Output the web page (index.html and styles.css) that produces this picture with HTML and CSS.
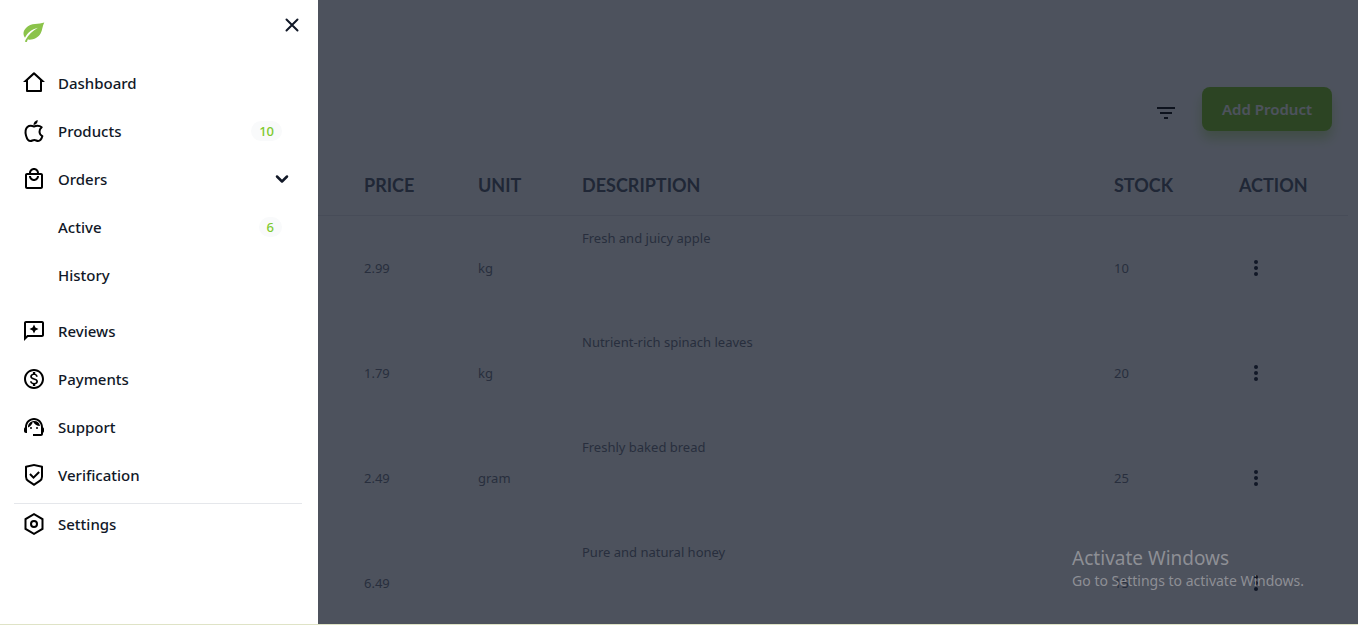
FILE: index.html
```html
<!DOCTYPE html>
<html lang="en">
<head>
    <meta charset="UTF-8">
    <meta name="viewport" content="width=device-width, initial-scale=1.0">
    <title>Products</title>
    <link rel="stylesheet" href="styles.css">
</head>
<body>
    <aside class="drawer">
        <header class="drawer-header">
            <a class="logo" href="#" aria-label="Home">
                <svg width="24" height="24" viewBox="0 0 24 24"><path fill="#8bc34a" d="M22.300 2.500C17 4.500 9 2.500 4 8 1 11 .8 14.500 3 17.800c2.500-5 6.500-8.300 13-10C10.500 11 6.500 14.500 3.500 20l-.6 1.700 2 .2.8-2.300c5.500.6 10.500-1.600 13-6.300 1.800-3.300 1.600-7.300 3.600-10.800z"/></svg>
            </a>
            <button class="close" type="button" aria-label="Close menu">
                <svg width="24" height="24" viewBox="0 0 24 24" fill="none" stroke="currentColor" stroke-width="2" stroke-linecap="round"><path d="M6.500 6.500l11 11M17.500 6.500l-11 11"/></svg>
            </button>
        </header>
        <nav class="menu">
            <a class="item" href="#">
                <svg class="icon" viewBox="0 0 24 24"><path d="M19 21H5a1 1 0 0 1-1-1v-9H1l10.327-9.388a1 1 0 0 1 1.346 0L23 11h-3v9a1 1 0 0 1-1 1zm-13-2h12V9.157l-6-5.454-6 5.454V19z"/></svg>
                Dashboard
            </a>
            <a class="item" href="#">
                <svg class="icon" viewBox="0 0 24 24"><path d="M15.700 1c.2 2.700-1.600 4.800-4.200 5.100C11.400 3.500 13.300 1.500 15.700 1z"/><path fill="none" stroke="#000" stroke-width="2" stroke-linejoin="round" d="M19.700 8.300C17 6.100 15 6.300 12 7.500 9 6.300 7.200 6.400 5.400 8 1.500 11.700 4.500 22 8.600 22c1.500 0 2-1 3.700-1s2.200 1 3.800 1c2 0 3.700-2.700 4.300-4.900-3.600-1.600-3.900-6.300-.7-8.800z"/></svg>
                Products
                <span class="badge">10</span>
            </a>
            <button class="item" type="button" aria-expanded="true">
                <svg class="icon" viewBox="0 0 24 24"><path d="M19 6h-2c0-2.760-2.240-5-5-5S7 3.240 7 6H5c-1.100 0-2 .9-2 2v12c0 1.100.9 2 2 2h14c1.100 0 2-.9 2-2V8c0-1.100-.9-2-2-2zm-7-3c1.660 0 3 1.340 3 3H9c0-1.660 1.340-3 3-3zm7 17H5V8h14v12zm-7-8c-1.660 0-3-1.340-3-3H7c0 2.760 2.240 5 5 5s5-2.240 5-5h-2c0 1.660-1.340 3-3 3z"/></svg>
                Orders
                <svg class="chevron" viewBox="0 0 16 16"><path d="M3 5.500l5 5 5-5"/></svg>
            </button>
            <div class="submenu">
                <a class="item" href="#">Active <span class="badge">6</span></a>
                <a class="item" href="#">History</a>
            </div>
            <a class="item" href="#">
                <svg class="icon" viewBox="0 0 24 24"><path d="M20 2H4c-1.100 0-1.990.9-1.990 2L2 22l4-4h14c1.100 0 2-.9 2-2V4c0-1.100-.9-2-2-2zm0 14H5.170L4 17.170V4h16v12zm-8-1.500l1.400-3.100 3.100-1.400-3.100-1.400L12 5.500l-1.400 3.100L7.500 10l3.100 1.400z"/></svg>
                Reviews
            </a>
            <a class="item" href="#">
                <svg class="icon" viewBox="0 0 24 24"><path d="M12 2C6.480 2 2 6.480 2 12s4.480 10 10 10 10-4.480 10-10S17.520 2 12 2zm0 18c-4.410 0-8-3.590-8-8s3.590-8 8-8 8 3.590 8 8-3.590 8-8 8zm.310-8.860c-1.770-.45-2.340-.94-2.340-1.670 0-.84.790-1.430 2.100-1.430 1.380 0 1.900.66 1.940 1.640h1.710c-.05-1.340-.87-2.570-2.490-2.970V5H10.900v1.690c-1.510.32-2.720 1.300-2.720 2.810 0 1.790 1.490 2.690 3.660 3.210 1.950.46 2.340 1.150 2.340 1.870 0 .53-.39 1.390-2.100 1.390-1.600 0-2.230-.72-2.320-1.640H8.040c.1 1.700 1.360 2.660 2.860 2.970V19h2.340v-1.670c1.520-.29 2.720-1.160 2.730-2.770-.01-2.200-1.900-2.960-3.660-3.420z"/></svg>
                Payments
            </a>
            <a class="item" href="#">
                <svg class="icon" viewBox="0 0 24 24"><path d="M21 12.220C21 6.730 16.740 3 12 3c-4.690 0-9 3.650-9 9.280-.6.340-1 .98-1 1.720v2c0 1.100.9 2 2 2h1v-6.100c0-3.870 3.130-7 7-7s7 3.130 7 7V19h-8v2h8c1.100 0 2-.9 2-2v-1.220c.590-.31 1-.92 1-1.640v-2.300c0-.7-.41-1.310-1-1.620z"/><circle cx="9" cy="13" r="1"/><circle cx="15" cy="13" r="1"/><path d="M18 11.030A6.040 6.040 0 0 0 12.050 6c-3.030 0-6.290 2.510-6.030 6.450a8.075 8.075 0 0 0 4.860-5.890c1.310 2.630 4 4.440 7.120 4.470z"/></svg>
                Support
            </a>
            <a class="item" href="#">
                <svg class="icon" viewBox="0 0 24 24"><path d="M12 1l8.217 1.826a1 1 0 0 1 .783.976v9.987a6 6 0 0 1-2.672 4.992L12 23l-6.328-4.219A6 6 0 0 1 3 13.790V3.802a1 1 0 0 1 .783-.976L12 1zm0 2.049L5 4.604v9.185a4 4 0 0 0 1.781 3.328L12 20.597l5.219-3.480A4 4 0 0 0 19 13.790V4.604L12 3.050zm4.452 5.173l1.415 1.414L11.503 16 7.260 11.757l1.414-1.414 2.828 2.828 4.950-4.950z"/></svg>
                Verification
            </a>
            <hr class="divider">
            <a class="item" href="#">
                <svg class="icon" viewBox="0 0 24 24"><path d="M12 1l9.500 5.500v11L12 23l-9.500-5.500v-11L12 1zm0 2.311L4.500 7.653v8.694l7.500 4.342 7.500-4.342V7.653L12 3.311zM12 16a4 4 0 1 1 0-8 4 4 0 0 1 0 8zm0-2a2 2 0 1 0 0-4 2 2 0 0 0 0 4z"/></svg>
                Settings
            </a>
        </nav>
    </aside>

    <main class="page">
        <div class="toolbar">
            <button class="filter" type="button" aria-label="Filter">
                <svg width="24" height="24" viewBox="0 0 24 24"><path d="M10 18h4v-2h-4v2zM3 6v2h18V6H3zm3 7h12v-2H6v2z"/></svg>
            </button>
            <button class="add" type="button">Add Product</button>
        </div>
        <table class="products">
            <thead>
                <tr>
                    <th class="price">Price</th>
                    <th class="unit">Unit</th>
                    <th>Description</th>
                    <th class="stock">Stock</th>
                    <th class="action">Action</th>
                </tr>
            </thead>
            <tbody>
                <tr>
                    <td class="price">2.99</td>
                    <td>kg</td>
                    <td class="description">Fresh and juicy apple</td>
                    <td>10</td>
                    <td><button class="more" type="button" aria-label="Actions"><svg width="24" height="24" viewBox="0 0 24 24"><circle cx="12" cy="6" r="2"/><circle cx="12" cy="12" r="2"/><circle cx="12" cy="18" r="2"/></svg></button></td>
                </tr>
                <tr>
                    <td class="price">1.79</td>
                    <td>kg</td>
                    <td class="description">Nutrient-rich spinach leaves</td>
                    <td>20</td>
                    <td><button class="more" type="button" aria-label="Actions"><svg width="24" height="24" viewBox="0 0 24 24"><circle cx="12" cy="6" r="2"/><circle cx="12" cy="12" r="2"/><circle cx="12" cy="18" r="2"/></svg></button></td>
                </tr>
                <tr>
                    <td class="price">2.49</td>
                    <td>gram</td>
                    <td class="description">Freshly baked bread</td>
                    <td>25</td>
                    <td><button class="more" type="button" aria-label="Actions"><svg width="24" height="24" viewBox="0 0 24 24"><circle cx="12" cy="6" r="2"/><circle cx="12" cy="12" r="2"/><circle cx="12" cy="18" r="2"/></svg></button></td>
                </tr>
                <tr>
                    <td class="price">6.49</td>
                    <td></td>
                    <td class="description">Pure and natural honey</td>
                    <td>15</td>
                    <td><button class="more" type="button" aria-label="Actions"><svg width="24" height="24" viewBox="0 0 24 24"><circle cx="12" cy="6" r="2"/><circle cx="12" cy="12" r="2"/><circle cx="12" cy="18" r="2"/></svg></button></td>
                </tr>
            </tbody>
        </table>
    </main>

    <div class="watermark">
        <p class="watermark-title">Activate Windows</p>
        <p>Go to Settings to activate Windows.</p>
    </div>
</body>
</html>
```
FILE: styles.css
```css
/* General Styles */
* {
    box-sizing: border-box;
}
body {
    display: flex;
    height: 100vh;
    margin: 0;
    overflow: hidden;
    border-bottom: 1px solid #dfe3c6;
    font-family: "Noto Sans", sans-serif;
    font-size: 14px;
    line-height: 20px;
    color: #111827;
}
button {
    border: 0;
    padding: 0;
    background: none;
    font: inherit;
    color: inherit;
    cursor: pointer;
}
svg {
    display: block;
    flex: none;
}

/* Drawer */
.drawer {
    flex: none;
    width: 318px;
    padding: 0 16px 0 14px;
    background-color: #fff;
}
.drawer-header {
    display: flex;
    justify-content: space-between;
    align-items: flex-start;
    height: 63px;
    padding: 13px 0 0 8px;
}
.logo {
    padding-top: 7px;
}
.close {
    margin-right: -2px;
}

/* Menu */
.menu,
.submenu {
    display: flex;
    flex-direction: column;
    gap: 8px;
}
.item {
    display: flex;
    align-items: center;
    gap: 12px;
    height: 40px;
    padding: 0 20px 0 8px;
    font-size: 15px;
    font-weight: 500;
    color: #111827;
    text-align: left;
    text-decoration: none;
}
.submenu {
    margin-bottom: 8px;
}
.submenu .item {
    padding-left: 44px;
}
.icon {
    width: 24px;
    height: 24px;
    fill: #000;
}
.chevron {
    width: 16px;
    height: 16px;
    margin: 0 -8px 0 auto;
    fill: none;
    stroke: currentColor;
    stroke-width: 2.5;
    stroke-linecap: round;
    stroke-linejoin: round;
}
.badge {
    margin-left: auto;
    padding: 0 8px;
    border-radius: 10px;
    background-color: #f9fafb;
    font-size: 13px;
    font-weight: 500;
    color: #7dc92c;
}
.divider {
    width: 100%;
    height: 1px;
    margin: 0 0 -8px;
    border: 0;
    background-color: #e5e7eb;
}

/* Products page */
.page {
    position: relative;
    flex: 1;
    overflow: hidden;
    padding: 87px 10px 0 0;
}
.page::after {
    content: "";
    position: absolute;
    inset: 0;
    background-color: rgba(17, 24, 39, 0.75);
}
.toolbar {
    display: flex;
    justify-content: flex-end;
    align-items: center;
    gap: 24px;
    padding-right: 16px;
}
.filter {
    padding-top: 8px;
}
.add {
    height: 44px;
    padding: 0 20px;
    border-radius: 8px;
    background-color: #7dc818;
    box-shadow: 0 8px 12px rgba(125, 200, 24, 0.4);
    font-size: 15px;
    font-weight: 600;
    color: #fff;
}

/* Table */
.products {
    width: 100%;
    margin-top: 24px;
    border-collapse: collapse;
    table-layout: fixed;
}
.products th {
    height: 60px;
    padding: 0;
    border-bottom: 1px solid #e5e7eb;
    font-family: Lato, sans-serif;
    font-size: 18px;
    font-weight: 700;
    color: #4b5563;
    text-align: left;
    text-transform: uppercase;
}
.products td {
    height: 105px;
    padding: 12px 0;
    font-size: 13px;
    color: #6b7280;
}
.products .price {
    width: 160px;
    padding-left: 46px;
}
.unit {
    width: 104px;
}
.stock {
    width: 125px;
}
.action {
    width: 109px;
}
.products .description {
    vertical-align: top;
}
.more {
    display: block;
    margin-left: 5px;
    fill: #111827;
}

/* Activation notice */
.watermark {
    position: absolute;
    right: 54px;
    bottom: 34px;
    color: #8d8f95;
}
.watermark p {
    margin: 0;
}
.watermark .watermark-title {
    font-size: 19px;
    line-height: 26px;
}
```
